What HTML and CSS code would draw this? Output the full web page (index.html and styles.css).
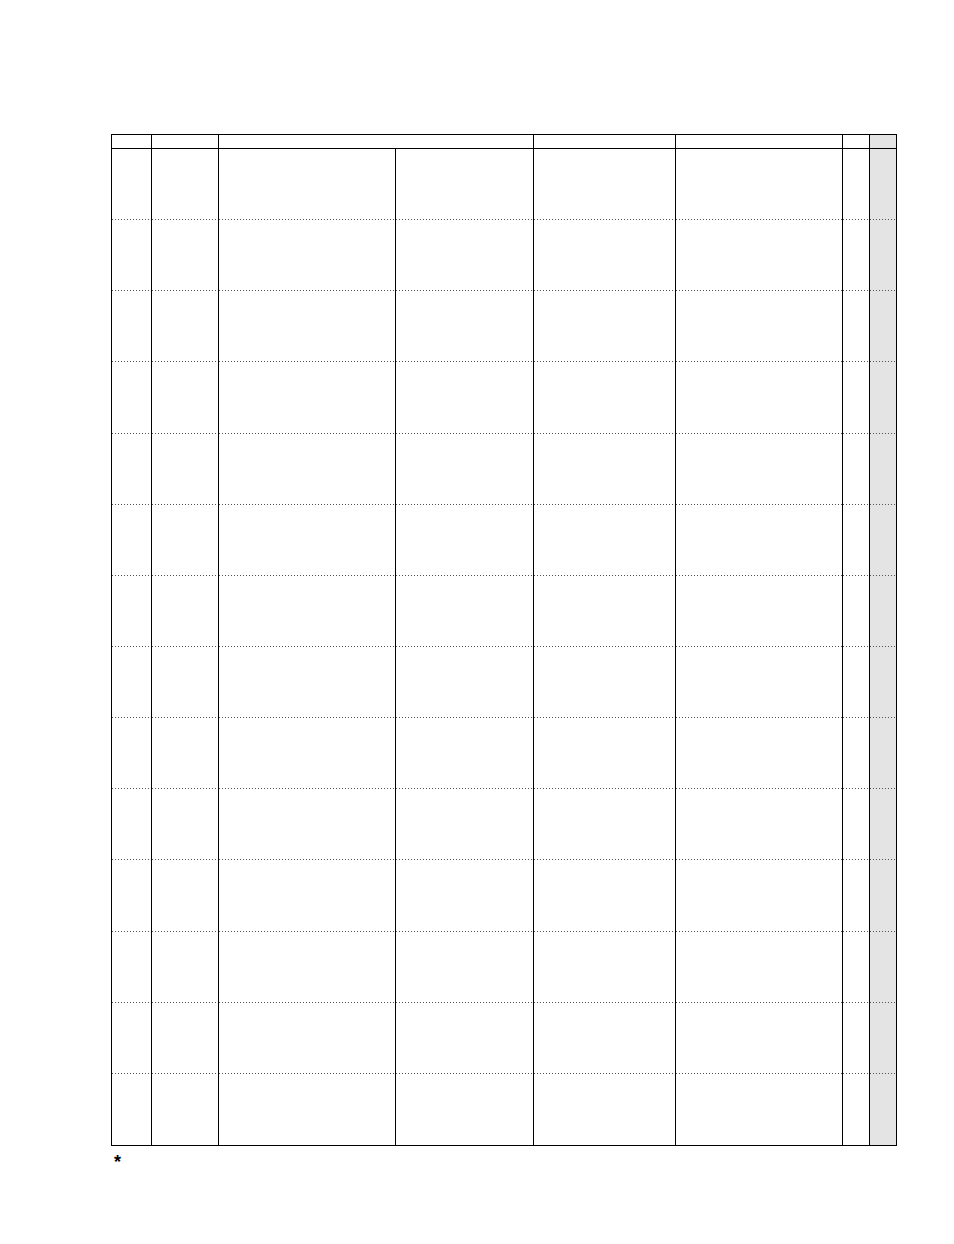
FILE: index.html
```html
<!DOCTYPE html>
<html>
<head>
<meta charset="utf-8">
<link rel="stylesheet" href="styles.css">
</head>
<body>
<div class="page">
  <div class="sheet">
    <div class="head">
      <div class="hc"></div>
      <div class="hc bl"></div>
      <div class="hc bl"></div>
      <div class="hc bl"></div>
      <div class="hc bl"></div>
      <div class="hc bl"></div>
      <div class="hc bl shade"></div>
    </div>
    <div class="body" id="body"></div>
  </div>
  <div class="note">*</div>
</div>
<script>
  var body = document.getElementById('body');
  for (var r = 0; r < 14; r++) {
    for (var c = 0; c < 8; c++) {
      var d = document.createElement('div');
      d.className = 'cell' + (c > 0 ? ' bl' : '') + (c === 7 ? ' shade' : '') + (r < 13 ? ' dot' : '');
      body.appendChild(d);
    }
  }
</script>
</body>
</html>
```

FILE: styles.css
```css
html, body {
  margin: 0;
  padding: 0;
  background: #fff;
}
.page {
  padding: 134px 0 0 111px;
  font-family: "Liberation Sans", Arial, sans-serif;
}
.sheet {
  width: 786px;
  border: 1px solid #000;
  box-sizing: border-box;
}
.head {
  display: grid;
  grid-template-columns: 39px 67px 315px 142px 167px 27px 27px;
  height: 14px;
  border-bottom: 1px solid #000;
  box-sizing: border-box;
}
.body {
  display: grid;
  grid-template-columns: 39px 67px 177px 138px 142px 167px 27px 27px;
  grid-template-rows: repeat(14, 1fr);
  height: 996px;
}
.bl {
  border-left: 1px solid #000;
}
.hc, .cell {
  box-sizing: border-box;
}
.shade {
  background-color: #e4e4e4;
}
.dot {
  background-image: repeating-linear-gradient(to right, #555 0 1px, transparent 1px 3px);
  background-size: 100% 1px;
  background-position: left bottom;
  background-repeat: no-repeat;
}
.note {
  margin: 6px 0 0 3px;
  font-size: 18px;
  font-weight: bold;
  line-height: 20px;
  height: 20px;
}
```
